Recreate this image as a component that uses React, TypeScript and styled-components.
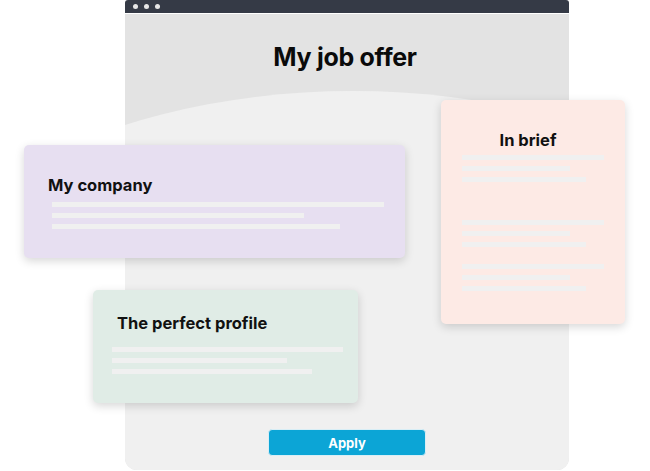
import React from "react";
import styled, { createGlobalStyle } from "styled-components";

const GlobalStyle = createGlobalStyle`
  body {
    margin: 0;
    background: #ffffff;
    font-family: "Inter", "Noto Sans", sans-serif;
  }
`;

const Stage = styled.div`
  position: relative;
  width: 650px;
  height: 471px;
  overflow: hidden;
  background: #ffffff;
`;

const Window = styled.div`
  margin-left: 125px;
  width: 444px;
  height: 470px;
  display: flex;
  flex-direction: column;
  border-radius: 3px 3px 12px 12px;
  overflow: hidden;
`;

const TopBar = styled.div`
  height: 13px;
  background: #353a46;
  border-bottom: 1px solid #ffffff;
  display: flex;
  align-items: center;
  gap: 6px;
  padding-left: 8px;
`;

const Dot = styled.span`
  width: 5px;
  height: 5px;
  border-radius: 50%;
  background: #e6e6e6;
`;

const Content = styled.div`
  flex: 1;
  position: relative;
  background: #e3e3e3;
  display: flex;
  flex-direction: column;
  align-items: center;
  overflow: hidden;

  &::before {
    content: "";
    position: absolute;
    left: -272px;
    top: 77px;
    width: 1000px;
    height: 620px;
    border-radius: 50%;
    background: #f0f0f0;
  }
`;

const Title = styled.h1`
  position: relative;
  margin: 28px 4px 0 0;
  font-size: 25px;
  font-weight: 700;
  letter-spacing: -0.3px;
  color: #0a0a0a;
`;

const ApplyButton = styled.button`
  position: relative;
  margin-top: auto;
  margin-bottom: 14px;
  width: 158px;
  height: 27px;
  border: 1px solid #d8eef6;
  border-radius: 4px;
  background: #0ca5d6;
  color: #ffffff;
  font-family: "Inter", sans-serif;
  font-weight: 700;
  font-size: 13px;
`;

const Card = styled.div<{ $bg: string; $left: number; $top: number; $w: number; $h: number }>`
  position: absolute;
  left: ${({ $left }) => $left}px;
  top: ${({ $top }) => $top}px;
  width: ${({ $w }) => $w}px;
  height: ${({ $h }) => $h}px;
  box-sizing: border-box;
  background: ${({ $bg }) => $bg};
  border-radius: 5px;
  box-shadow: 0 3px 10px rgba(0, 0, 0, 0.16);
`;

const CardTitle = styled.h2<{ $center?: boolean; $top: number; $left: number }>`
  margin: ${({ $top }) => $top}px 0 0 ${({ $left }) => $left}px;
  font-size: 16.5px;
  line-height: 20px;
  font-weight: 700;
  color: #111111;
  text-align: ${({ $center }) => ($center ? "center" : "left")};
`;

const Lines = styled.div<{ $left: number; $top: number }>`
  display: flex;
  flex-direction: column;
  gap: 6px;
  margin: ${({ $top }) => $top}px 0 0 ${({ $left }) => $left}px;
`;

const Line = styled.div<{ $w: number }>`
  width: ${({ $w }) => $w}px;
  height: 5px;
  background: #f0f0f0;
`;

const BriefGroups = styled.div`
  display: flex;
  flex-direction: column;
  gap: 38px;
`;

const BriefGroupsTail = styled.div`
  display: flex;
  flex-direction: column;
  gap: 17px;
`;

export default function App() {
  return (
    <>
      <GlobalStyle />
      <Stage>
        <Window>
          <TopBar>
            <Dot />
            <Dot />
            <Dot />
          </TopBar>
          <Content>
            <Title>My job offer</Title>
            <ApplyButton>Apply</ApplyButton>
          </Content>
        </Window>

        <Card $bg="#e7dff1" $left={24} $top={145} $w={381} $h={113}>
          <CardTitle $top={30} $left={24}>My company</CardTitle>
          <Lines $left={28} $top={7}>
            <Line $w={332} />
            <Line $w={252} />
            <Line $w={288} />
          </Lines>
        </Card>

        <Card $bg="#fdeae5" $left={441} $top={100} $w={184} $h={224}>
          <CardTitle $center $top={30} $left={-10}>In brief</CardTitle>
          <BriefGroups>
            <Lines $left={21} $top={5}>
              <Line $w={142} />
              <Line $w={108} />
              <Line $w={124} />
            </Lines>
            <BriefGroupsTail>
              <Lines $left={21} $top={0}>
                <Line $w={142} />
                <Line $w={108} />
                <Line $w={124} />
              </Lines>
              <Lines $left={21} $top={0}>
                <Line $w={142} />
                <Line $w={108} />
                <Line $w={124} />
              </Lines>
            </BriefGroupsTail>
          </BriefGroups>
        </Card>

        <Card $bg="#e0ece6" $left={93} $top={290} $w={265} $h={113}>
          <CardTitle $top={23} $left={24}>The perfect profile</CardTitle>
          <Lines $left={19} $top={14}>
            <Line $w={231} />
            <Line $w={175} />
            <Line $w={200} />
          </Lines>
        </Card>
      </Stage>
    </>
  );
}
